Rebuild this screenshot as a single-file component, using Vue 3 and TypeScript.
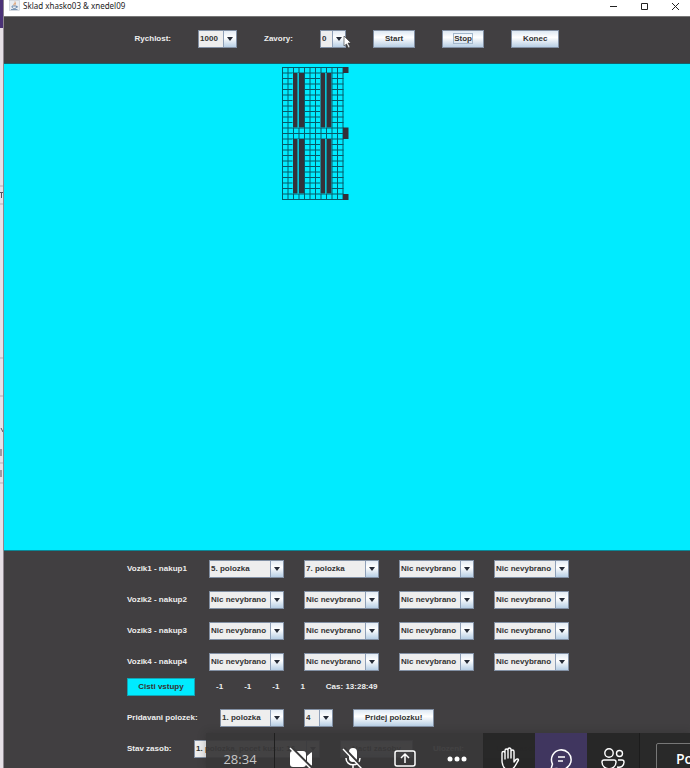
<script setup lang="ts">
import { ref } from 'vue'

const speed = ref('1000')
const barriers = ref('0')
const empty = 'Nic nevybrano'
const items = ['1. polozka', '2. polozka', '3. polozka', '4. polozka', '5. polozka', '6. polozka', '7. polozka']

interface Cart {
  label: string
  picks: string[]
}

const carts = ref<Cart[]>([
  { label: 'Vozik1 - nakup1', picks: ['5. polozka', '7. polozka', empty, empty] },
  { label: 'Vozik2 - nakup2', picks: [empty, empty, empty, empty] },
  { label: 'Vozik3 - nakup3', picks: [empty, empty, empty, empty] },
  { label: 'Vozik4 - nakup4', picks: [empty, empty, empty, empty] },
])

const counters = ['-1', '-1', '-1', '1']
const newItem = ref('1. polozka')
const amount = ref('4')
const stock = ref('1. polozka, pocet kusu: 16')

// Warehouse floor: 11 x 24 cells, 11 drawing units per cell
const cell = 11
const columns = Array.from({ length: 12 }, (_, i) => i * cell + 1)
const lines = Array.from({ length: 25 }, (_, i) => i * cell + 1)
const racks = [
  { x: 22, w: 9 }, { x: 34, w: 10 }, { x: 77, w: 9 }, { x: 89, w: 10 },
]
</script>

<template>
  <div class="desktop">
    <aside class="behind" aria-hidden="true">
      <svg viewBox="0 0 3 768" preserveAspectRatio="xMinYMin slice">
        <rect width="3" height="28" fill="#4b3277" />
        <path d="M0 186h3M0 204h3M0 358h3M0 396h3M0 463h3M0 483h3" stroke="#b5adb5" />
        <path d="M0 192.500h3M1.500 192v6M1 428l2 4M1 449v7M1 470v7" stroke="#5a5560" />
      </svg>
    </aside>
    <main class="window">
      <header class="titlebar">
        <svg class="java" viewBox="0 0 22 22">
          <rect x="1" y="1" width="20" height="20" fill="#e9edf2" stroke="#b4bcc8" />
          <path d="M12 3c2 3-4 4-2 8M14 6c-3 2-1 3-2 5" fill="none" stroke="#d98a4c" stroke-width="1.6" />
          <path d="M6 12h9c0 5-2 5-4.500 5S6 16 6 12zM15 13c3-1 3 2 0 2M4 19h13" fill="none" stroke="#5b7ea5" stroke-width="1.600" />
        </svg>
        <h1>Sklad xhasko03 &amp; xnedel09</h1>
        <div class="winbtns">
          <button type="button" aria-label="Minimize"><svg viewBox="0 0 9 9"><path d="M1 4.500h7" /></svg></button>
          <button type="button" aria-label="Maximize"><svg viewBox="0 0 9 9"><path d="M1.500 1.500h6v6h-6z" /></svg></button>
          <button type="button" aria-label="Close"><svg viewBox="0 0 9 9"><path d="M1 1l7 7M8 1l-7 7" /></svg></button>
        </div>
      </header>

      <section class="toolbar">
        <label for="speed">Rychlost:</label>
        <span class="combo w-speed"><select id="speed" v-model="speed"><option>1000</option><option>500</option></select></span>
        <label for="barriers">Zavory:</label>
        <span class="combo w-bar"><select id="barriers" v-model="barriers"><option>0</option><option>1</option></select></span>
        <button class="btn" type="button">Start</button>
        <button class="btn" type="button"><span class="focus">Stop</span></button>
        <button class="btn" type="button">Konec</button>
        <svg class="cursor" viewBox="0 0 9 14"><path d="M1 1v10l2.500-2 2 4 1.500-1-2-4H8z" fill="#fff" stroke="#333" stroke-width=".6" /></svg>
      </section>

      <section class="stage">
        <svg class="floor" viewBox="0 0 134 266">
          <g stroke="#075a69" stroke-width="2">
            <line v-for="x in columns" :key="'c' + x" :x1="x" :x2="x" y1="0" y2="266" />
            <line v-for="y in lines" :key="'l' + y" x1="0" x2="123" :y1="y" :y2="y" />
          </g>
          <g v-for="top in [12, 144]" :key="top">
            <rect x="21" :y="top" width="23" height="109" fill="#00ebff" />
            <rect x="76" :y="top" width="23" height="109" fill="#00ebff" />
            <rect x="32" :y="top" width="1" height="109" fill="#0a9aab" />
            <rect x="87" :y="top" width="1" height="109" fill="#0a9aab" />
            <rect v-for="r in racks" :key="r.x" :x="r.x" :y="top" :width="r.w" height="109" fill="#35323a" />
          </g>
          <g fill="#34303a">
            <rect x="122" y="0" width="11" height="12" />
            <rect x="122" y="121" width="11" height="23" />
            <rect x="122" y="254" width="11" height="12" />
          </g>
        </svg>
      </section>

      <section class="panel">
        <div class="rows">
          <div v-for="(cart, c) in carts" :key="cart.label" class="row">
            <label class="cart" :for="'cart' + c + '-0'">{{ cart.label }}</label>
            <span v-for="(_, p) in cart.picks" :key="p" class="combo w-item">
              <select :id="'cart' + c + '-' + p" v-model="cart.picks[p]" :aria-label="cart.label">
                <option>{{ empty }}</option>
                <option v-for="i in items" :key="i">{{ i }}</option>
              </select>
            </span>
          </div>

          <div class="row status">
            <button class="clear" type="button">Cisti vstupy</button>
            <span v-for="(n, i) in counters" :key="i">{{ n }}</span>
            <span>Cas: 13:28:49</span>
          </div>

          <div class="row">
            <label class="add" for="new-item">Pridavani polozek:</label>
            <span class="combo w-new"><select id="new-item" v-model="newItem"><option v-for="i in items" :key="i">{{ i }}</option></select></span>
            <span class="combo w-amount"><select id="amount" v-model="amount" aria-label="Pocet"><option>4</option><option>5</option></select></span>
            <button class="btn" type="button">Pridej polozku!</button>
          </div>

          <div class="row">
            <label class="stock" for="stock">Stav zasob:</label>
            <span class="combo w-stock"><select id="stock" v-model="stock"><option>1. polozka, pocet kusu: 16</option></select></span>
            <button class="btn" type="button">Nacti zasoby</button>
            <span>Ulozeni:</span>
            <button class="btn" type="button">Uloz zasoby</button>
          </div>
        </div>
      </section>
    </main>

    <nav class="call">
      <span class="time">28:34</span>
      <button class="cell" type="button" aria-label="Camera">
        <svg viewBox="0 0 24 24"><path d="M4 4h10a3 3 0 0 1 3 3v10a3 3 0 0 1-3 3H4a3 3 0 0 1-3-3V7a3 3 0 0 1 3-3zM18 9l4-3.500c.6-.4 1 0 1 .5v12c0 .6-.5.800-1 .400L18 15z" fill="#fff" /><path d="M2 0l22 22" stroke="#3a393a" stroke-width="2.500" /><path d="M1 1l22 22" stroke="#fff" stroke-width="1.400" /></svg>
      </button>
      <button class="cell" type="button" aria-label="Microphone">
        <svg viewBox="0 0 24 24"><rect x="8" y="1" width="8" height="14" rx="4" fill="#fff" /><path d="M5 11c0 9 14 9 14 0M12 18v4" fill="none" stroke="#fff" stroke-width="1.500" /><path d="M3 1l20 21" stroke="#3a393a" stroke-width="2.500" /><path d="M2 2l19 20" stroke="#fff" stroke-width="1.400" /></svg>
      </button>
      <button class="cell" type="button" aria-label="Share">
        <svg viewBox="0 0 24 24" fill="none" stroke="#fff" stroke-width="1.500"><rect x="2" y="4" width="20" height="15" rx="2" /><path d="M12 16V7M8 11l4-4 4 4" /></svg>
      </button>
      <button class="cell" type="button" aria-label="More">
        <svg viewBox="0 0 24 24" fill="#fff"><circle cx="5" cy="12" r="2.500" /><circle cx="12" cy="12" r="2.500" /><circle cx="19" cy="12" r="2.500" /></svg>
      </button>
      <button class="cell solid" type="button" aria-label="Raise hand">
        <svg viewBox="0 0 24 24" fill="none" stroke="#fff" stroke-width="1.400" stroke-linejoin="round"><path d="M5 14V6a1.500 1.500 0 0 1 3 0v6V3.500a1.500 1.500 0 0 1 3 0V11 2.500a1.500 1.500 0 0 1 3 0V11 4.500a1.500 1.500 0 0 1 3 0V15l2-2.500c1-1 2.500-.5 2.500.5-2 3-3.500 8-7 9.500-4 1-9 0-9.500-8.500z" /></svg>
      </button>
      <button class="cell chat" type="button" aria-label="Chat">
        <svg viewBox="0 0 24 24" fill="none" stroke="#fff" stroke-width="1.500" stroke-linejoin="round"><path d="M2 22l1.500-5A9.800 9.800 0 1 1 8 21.500zM9 10h7M9 14h5" /></svg>
      </button>
      <button class="cell solid" type="button" aria-label="People">
        <svg viewBox="0 0 24 24" fill="none" stroke="#fff" stroke-width="1.400"><circle cx="8" cy="6" r="4.200" /><circle cx="18.500" cy="6.500" r="3" /><path d="M3 13h10a2 2 0 0 1 2 2c0 9-14 9-14 0a2 2 0 0 1 2-2zM17 13h4a2 2 0 0 1 2 2c0 4-3 6-7 5" /></svg>
      </button>
      <div class="tail"><button class="people" type="button">Po</button></div>
    </nav>
  </div>
</template>

<style>
body { overflow: hidden; }
</style>

<style scoped>
.desktop {
  position: relative;
  display: flex;
  height: 100vh;
  overflow: hidden;
  font: bold 8px/12px "Liberation Sans", Arial, sans-serif;
  color: #eee;
}
button, select { font: inherit; }
.behind {
  flex: none;
  width: 3px;
  background: #e6e0e6;
  border-right: 1px solid #8e8790;
}
.behind svg { display: block; width: 3px; height: 768px; }
.window { flex: 1; min-width: 0; display: flex; flex-direction: column; }
.titlebar {
  display: flex;
  align-items: flex-start;
  height: 16px;
  padding-left: 5px;
  background: #fff;
  color: #222;
}
.java { width: 11px; height: 11px; margin-right: 3px; }
h1 { flex: 1; margin: 0; font: 8px/12px "Noto Sans", "Open Sans", sans-serif; }
.winbtns { display: flex; }
.winbtns button {
  width: 31px;
  height: 12px;
  padding: 0;
  border: 0;
  background: none;
}
.winbtns svg { display: block; width: 9px; height: 9px; margin: 1px 10px 1px 12px; fill: none; stroke: #222; }
.toolbar {
  position: relative;
  display: flex;
  align-items: center;
  justify-content: center;
  gap: 27px;
  height: 48px;
  box-sizing: border-box;
  border-top: 1px solid #777;
  border-bottom: 1px solid #16606a;
  padding-bottom: 2px;
  background: #413f41;
}
.cursor { position: absolute; left: 339px; top: 18px; width: 9px; height: 14px; }
.combo { position: relative; display: flex; flex: none; height: 18px; }
.combo select {
  width: 100%;
  padding: 0 0 0 1px;
  appearance: none;
  border: 1px solid #8290a4;
  border-radius: 0;
  background: #eee;
  color: #333;
}
.combo::before {
  content: "";
  position: absolute;
  top: 1px;
  right: 1px;
  bottom: 1px;
  width: 12px;
  border-left: 1px solid #8fa0b8;
  background: linear-gradient(#e4ecf5, #fff 40%, #b8cfe5);
  pointer-events: none;
}
.combo::after {
  content: "";
  position: absolute;
  top: 7px;
  right: 4px;
  border: 3px solid transparent;
  border-top: 4px solid #262c38;
  border-bottom: 0;
  pointer-events: none;
}
.w-speed { width: 39px; }
.w-bar { width: 26px; }
.w-item { width: 75px; }
.w-new { width: 64px; }
.w-amount { width: 29px; }
.w-stock { width: 126px; }
.btn {
  height: 18px;
  padding: 0 11px;
  border: 1px solid #8290a4;
  background: linear-gradient(#dde8f3, #fff 40%, #b8cfe5);
  color: #333;
}
.focus { outline: 1px solid #a3b8cc; }
.stage { flex: 1; min-height: 0; padding: 3px 0 0 278px; background: #00ebff; }
.floor { display: block; width: 67px; height: 133px; }
.panel {
  display: flex;
  justify-content: center;
  height: 218px;
  box-sizing: border-box;
  border-top: 1px solid #0b8796;
  padding-left: 2px;
  background: #413f41;
}
.rows { display: flex; flex-direction: column; gap: 13px; padding-top: 9px; }
.row { display: flex; align-items: center; gap: 20px; height: 18px; white-space: nowrap; }
.row.status { margin-top: -6px; gap: 21px; }
.cart { width: 62px; }
.add { width: 73px; }
.stock { width: 47px; }
.clear {
  width: 68px;
  height: 18px;
  padding: 0;
  border: 1px solid #11a5b5;
  background: #00ebff;
  color: #333;
}
.call {
  position: absolute;
  left: 206px;
  right: 0;
  bottom: 0;
  display: flex;
  height: 35px;
  overflow: hidden;
  background: rgba(57, 56, 57, .95);
  box-shadow: 0 0 8px rgba(30, 30, 30, .3);
}
.time {
  width: 68px;
  flex: none;
  border-right: 1px solid #1f1f1f;
  padding-top: 16px;
  text-align: center;
  font: 13px/20px "Open Sans", "Noto Sans", sans-serif;
  color: #c8c8c8;
}
.cell {
  flex: none;
  width: 52px;
  padding: 14px 0 0;
  border: 0;
  background: none;
}
.cell svg { display: block; width: 24px; height: 24px; margin: 0 auto; }
.solid { background: rgba(38, 38, 38, .9); }
.chat { background: #40365f; }
.tail { flex: 1; padding: 10px 0 0 16px; border-left: 1px solid #1c1c1c; background: #292929; }
.people {
  height: 32px;
  padding: 0 19px;
  border: 1px solid #777;
  border-radius: 2px;
  background: none;
  color: #fff;
  font: 600 14px/30px "Open Sans", "Noto Sans", sans-serif;
}
</style>
